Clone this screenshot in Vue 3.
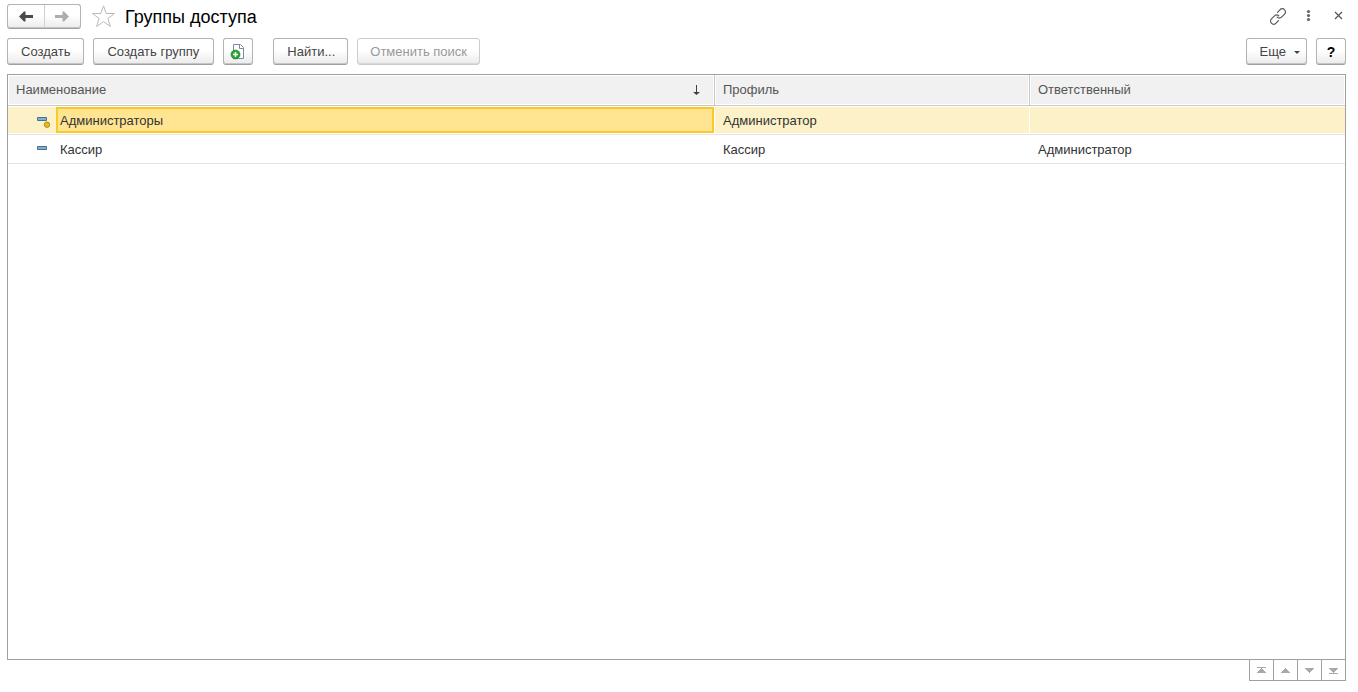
<script setup>
import { ref } from 'vue'

const rows = [
  { name: 'Администраторы', profile: 'Администратор', owner: '', predefined: true },
  { name: 'Кассир', profile: 'Кассир', owner: 'Администратор', predefined: false },
]
const selected = ref(0)
const pager = [
  { label: 'В начало', d: 'M0 1h9v1H0zM4 2h1v1h1v1h1v1h1v1h1v1H0V6h1V5h1V4h1V3h1z' },
  { label: 'Вверх', d: 'M4 2h1v1h1v1h1v1h1v1h1v1H0V6h1V5h1V4h1V3h1z' },
  { label: 'Вниз', d: 'M0 2h9v1H8v1H7v1H6v1H5v1H4V6H3V5H2V4H1V3H0z' },
  { label: 'В конец', d: 'M0 2h9v1H8v1H7v1H6v1H5v1H4V6H3V5H2V4H1V3H0zM0 7h9v1H0z' },
]
</script>

<template>
  <main class="page">
    <header class="titlebar">
      <div class="nav">
        <button type="button" aria-label="Назад">
          <svg width="14" height="11" viewBox="0 0 14 11"><path d="M0 5.500 5 .5h1.500V4H14v3H6.500v3.500H5z" fill="#4a4a4a" /></svg>
        </button>
        <button type="button" aria-label="Вперед">
          <svg width="14" height="11" viewBox="0 0 14 11"><path d="M14 5.500 9 .5H7.500V4H0v3h7.500v3.500H9z" fill="#adadad" /></svg>
        </button>
      </div>
      <button type="button" class="plain star" aria-label="Избранное">
        <svg width="24" height="24" viewBox="0 0 24 24"><path d="m12.500.8 2.700 7.700h8.300l-6.600 5 2.500 8-6.900-4.800-6.900 4.800 2.500-8-6.600-5h8.300z" fill="#fff" stroke="#b5bac0" /></svg>
      </button>
      <h1>Группы доступа</h1>
      <div class="window-tools">
        <button type="button" class="plain" aria-label="Получить ссылку">
          <svg width="18" height="18" viewBox="0 0 18 18" fill="none" stroke="#5a5a5a" stroke-width="1.2" stroke-linecap="round"><path d="m8.500 4.300 2.400-2.400a2.900 2.900 0 0 1 4.700 0 2.900 2.900 0 0 1 0 4.200L12.500 9.200a2.900 2.900 0 0 1-4.300 0M9.500 12.700l-2.400 2.400a2.900 2.900 0 0 1-4.700 0 2.900 2.900 0 0 1 0-4.200l3.100-3.100a2.900 2.900 0 0 1 4.300 0" /></svg>
        </button>
        <button type="button" class="plain" aria-label="Меню">
          <svg width="18" height="18" viewBox="0 0 18 18" fill="#666"><circle cx="9.500" cy="3.500" r="1.600" /><circle cx="9.500" cy="7.500" r="1.600" /><circle cx="9.500" cy="11.500" r="1.600" /></svg>
        </button>
        <button type="button" class="plain" aria-label="Закрыть">
          <svg width="18" height="18" viewBox="0 0 18 18" stroke="#555" stroke-width="1.200"><path d="m6 4 7 7m0-7-7 7" /></svg>
        </button>
      </div>
    </header>

    <div class="toolbar">
      <button type="button" class="btn">Создать</button>
      <button type="button" class="btn group">Создать группу</button>
      <button type="button" class="btn square" aria-label="Создать копированием">
        <svg width="16" height="16" viewBox="0 0 16 16">
          <path d="M3.500.5h7l3 3v11h-10z" fill="#fff" stroke="#7b8ba0" />
          <path d="M9.500.5v4h4" fill="none" stroke="#7b8ba0" />
          <circle cx="5.500" cy="10.500" r="4.600" fill="#28a035" stroke="#178525" stroke-width=".5" />
          <path d="M5.500 8v5M3 10.500h5" stroke="#fff" stroke-width="1.500" />
        </svg>
      </button>
      <button type="button" class="btn find">Найти...</button>
      <button type="button" class="btn cancel" disabled>Отменить поиск</button>
      <button type="button" class="btn more">Еще<span class="caret"></span></button>
      <button type="button" class="btn square help">?</button>
    </div>

    <section class="list">
      <table>
        <colgroup><col><col class="side"><col class="side"></colgroup>
        <thead>
          <tr>
            <th scope="col">
              <div class="sorted">Наименование
                <svg width="7" height="12" viewBox="0 0 7 12"><path d="M3 1h1v7h3L3.500 11 0 8h3z" fill="#404040" /></svg>
              </div>
            </th>
            <th scope="col">Профиль</th>
            <th scope="col">Ответственный</th>
          </tr>
        </thead>
        <tbody>
          <tr v-for="(row, i) in rows" :key="row.name" :class="{ selected: i === selected }" @click="selected = i">
            <td class="first">
              <div class="name-cell">
                <svg class="mark" width="14" height="16" viewBox="0 0 14 16">
                  <path d="M.5 5.500h9v3h-9z" fill="#7fb0cf" stroke="#49708f" />
                  <circle v-if="row.predefined" cx="10" cy="12.700" r="2.700" fill="#e8b923" stroke="#b98a12" />
                </svg>
                <span class="name">{{ row.name }}</span>
              </div>
            </td>
            <td>{{ row.profile }}</td>
            <td>{{ row.owner }}</td>
          </tr>
        </tbody>
      </table>
    </section>

    <nav class="pager" aria-label="Прокрутка списка">
      <button v-for="p in pager" :key="p.label" type="button" :aria-label="p.label">
        <svg width="9" height="9" viewBox="0 0 9 9" shape-rendering="crispEdges"><path :d="p.d" fill="#a9a9a9" /></svg>
      </button>
    </nav>
  </main>
</template>

<style>
body { margin: 0; background: #fff; }
</style>

<style scoped>
.page {
  box-sizing: border-box;
  display: flex;
  flex-direction: column;
  min-height: 100vh;
  padding: 4px 12px 11px 7px;
  font: 13px/16px "Liberation Sans", Arial, sans-serif;
  color: #333;
}
button { font: inherit; color: inherit; box-sizing: border-box; margin: 0; padding: 0; }
svg { display: block; flex: none; }
.titlebar { display: flex; align-items: center; height: 25px; }
.nav, .btn {
  box-sizing: border-box;
  border: 1px solid #b3b3b3;
  border-bottom-color: #a0a0a0;
  border-radius: 3px;
  background: linear-gradient(#fff 45%, #ebebeb);
  box-shadow: inset 0 -1px #c4c4c4;
}
.nav { display: flex; width: 74px; height: 25px; }
.nav button { flex: 1; display: flex; align-items: center; justify-content: center; border: 0; background: none; }
.nav button + button { border-left: 1px solid #d0d0d0; }
.plain { border: 0; background: none; }
.star { margin-left: 10px; }
h1 { margin: 0 0 0 10px; font-size: 18px; line-height: 24px; font-weight: 400; color: #000; }
.window-tools { display: flex; gap: 12px; margin-left: auto; margin-right: -1px; }
.toolbar { display: flex; gap: 9px; margin-top: 9px; }
.btn { display: flex; align-items: center; justify-content: center; height: 27px; padding: 1px 13px 0; color: #444; white-space: nowrap; }
.btn:disabled { color: #999; border-color: #ccc; box-shadow: inset 0 -1px #d8d8d8; }
.btn.group { padding: 1px 14px 0 13px; }
.btn.square { width: 30px; padding: 0; }
.btn.find { margin-left: 11px; padding: 1px 12px 0 13px; }
.btn.cancel { padding: 1px 12px 0; }
.btn.more { margin-left: auto; padding: 1px 6px 0 13px; gap: 8px; }
.caret { border: 3px solid transparent; border-top-color: #444; border-bottom: 0; }
.help { color: #000; font-weight: 700; font-size: 14px; }
.list { flex: 1; margin-top: 9px; border: 1px solid #a0a0a0; }
table { width: 100%; table-layout: fixed; border-collapse: separate; border-spacing: 0; }
.side { width: 315px; }
th, td { box-sizing: border-box; padding: 0 8px; text-align: left; font-weight: 400; }
th { height: 31px; border-right: 1px solid #c8c8c8; border-bottom: 1px solid #c8c8c8; background: #f1f1f1; box-shadow: inset 0 0 0 1px #fff; color: #555; }
th:last-child { border-right: 0; }
.sorted { display: flex; align-items: center; justify-content: space-between; padding-right: 6px; }
td { height: 29px; padding-top: 2px; border-bottom: 1px solid #e3e3e3; border-right: 1px solid #fff; box-shadow: inset 0 1px #fff, inset 0 -1px #fff; }
td:last-child { border-right: 0; }
.selected td { background: #fdf2c7; }
.first { padding: 0; }
.name-cell { display: flex; align-items: center; padding-left: 29px; }
.mark { margin-right: 5px; }
.name { flex: 1; box-sizing: border-box; height: 26px; border: 2px solid transparent; padding: 1px 2px 0; line-height: 22px; }
.selected .name { border-color: #fbc926; background: #ffe591; }
.pager { display: flex; justify-content: flex-end; }
.pager button { display: flex; align-items: center; justify-content: center; width: 25px; height: 21px; margin-left: -1px; border: 1px solid #a0a0a0; background: #fff; border-top: 0; }
</style>
